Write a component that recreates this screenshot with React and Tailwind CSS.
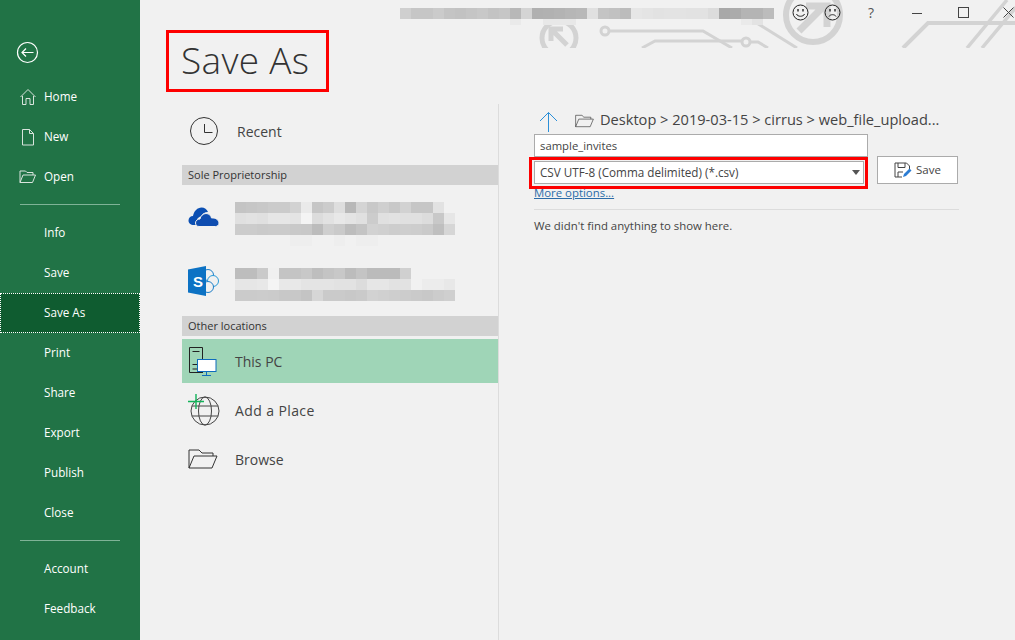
const font = { fontFamily: '"Open Sans", "Noto Sans", sans-serif' }

const topItems = ['Info', 'Save', 'Save As', 'Print', 'Share', 'Export', 'Publish', 'Close']

// gray levels of the pixelated (redacted) strips, one string per row, 2 hex digits per cell
const titleBlur = [
  'cfc6c6cbc4c2c5c8c3c6b8d4b0b1b3b6b8e0c4c1bce6e4e2e3e3e2e2dca8abb4b4bc',
  'f1f1f1f1f1f1f1f1f1f1eaf1f1e8e8e8f1f1f1f1f1f1f1f1f1f1f1f1f1f1f1eae3f1',
]
const oneDriveBlur = [
  'c4c6c8cbcbd2eac6ccdeb8d4c8cfc8d2c6c6e2f1',
  'e0e2e0e6e6e4f4dce2e8e4e0cce0e2e0e0dcc8e6',
  'cccccacbcbc9c8bccfcabdc4d2d0cdcecdcabfd6',
  'f1f1f1f1f1eeeef1f1eef1eeeef1f1f1f1f1f1f1',
]
const sharePointBlur = [
  'bdbdcaf0c4c4c8bec4c8bcc4bbbbbbd0f1f1f1f1',
  'e6e6e8f4e8e8e4e4e4e2e2dce6e6e2e2f1ecece8',
  'cbcbcccbc8c8c4d6cacac8cad2d0cecccac8cccf',
]

function Blur({ rows, lastHeight }) {
  return (
    <div className="flex flex-col">
      {rows.map((row, r) => (
        <div key={r} className="flex">
          {row.match(/../g).map((g, c) => (
            <div
              key={c}
              className="w-[11px]"
              style={{
                height: lastHeight && r === rows.length - 1 ? lastHeight : 11,
                backgroundColor: `#${g}${g}${g}`,
              }}
            />
          ))}
        </div>
      ))}
    </div>
  )
}

function CircuitArt() {
  return (
    <svg className="absolute left-0 top-0" width="1015" height="48" fill="none" stroke="#d3d3d3">
      <circle cx="559" cy="38" r="17" strokeWidth="5" />
      <path d="M553 31 567 45M551 41V29H563" strokeWidth="5" />
      <circle cx="605" cy="31" r="4" strokeWidth="3" />
      <path d="M609 31H703L732 48" strokeWidth="3" />
      <path d="M642 48 655 41H742M750 42H758L768 48" strokeWidth="3" />
      <circle cx="746" cy="42" r="4" strokeWidth="3" />
      <path d="M755 22 797 48" strokeWidth="3" />
      <circle cx="813" cy="15" r="27" strokeWidth="6" />
      <path d="M799 31 824 6M806 6H827V27" strokeWidth="7" />
      <path d="M903 48 928 23H1015" strokeWidth="4" />
      <path d="M967 48 1007 0M982 48 1022 0" strokeWidth="3.5" />
    </svg>
  )
}

function Face({ sad }) {
  return (
    <svg width="17" height="17" viewBox="0 0 17 17" fill="none" stroke="#222">
      <circle cx="8.5" cy="8.5" r="7.5" />
      <path d="M6 5v2.5M11 5v2.5" strokeWidth="1.4" />
      {sad ? <path d="M5 12.5c1-2.4 6-2.4 7 0" /> : <path d="M4.5 10c1 3 7 3 8 0" />}
    </svg>
  )
}

function WindowControls() {
  return (
    <div className="relative flex h-[24px] items-center pt-[1px]">
      <div className="ml-[18px]"><Face /></div>
      <div className="ml-[15px]"><Face sad /></div>
      <span className="ml-[27px] w-[8px] text-[14px] text-[#555]">?</span>
      <svg className="ml-[36px]" width="10" height="10" stroke="#444"><path d="M0 5.5H10" /></svg>
      <svg className="ml-[36px]" width="11" height="11" fill="none" stroke="#444"><rect x=".5" y=".5" width="10" height="10" /></svg>
      <svg className="ml-[34px] shrink-0" width="11" height="11" stroke="#444"><path d="M.5.5 10.5 10.5M10.5.5 .5 10.5" /></svg>
    </div>
  )
}

function SideRow({ label, active, icon }) {
  return (
    <div
      className={`flex h-[40px] items-center text-[11.7px] text-white ${
        active ? 'border border-dotted border-white bg-[#0f5c30] pl-[43px]' : 'pl-[44px]'
      }`}
    >
      {icon && <span className="absolute left-[19px] flex h-[18px] w-[18px] items-center justify-center">{icon}</span>}
      {label}
    </div>
  )
}

function Sidebar() {
  const ink = '#d9e4dd'
  return (
    <aside className="relative flex h-full w-[140px] shrink-0 flex-col bg-[#217346] pt-[77px]">
      <svg className="absolute left-[16px] top-[41px]" width="23" height="23" fill="none" stroke="#fff">
        <circle cx="11.5" cy="11.5" r="10" strokeWidth="1.2" />
        <path d="M17.5 11.5H6M10 7.5 6 11.5 10 15.5" strokeWidth="1.2" />
      </svg>
      <SideRow
        label="Home"
        icon={<svg width="18" height="18" fill="none" stroke={ink}><path d="M1.5 9 9 1.5 16.5 9M3.5 8V16.5H7V10.5H11V16.5H14.5V8" /></svg>}
      />
      <SideRow
        label="New"
        icon={<svg width="14" height="17" fill="none" stroke={ink}><path d="M1.5 .5H8.5L12.5 4.5V16H1.5ZM8.5 .5V4.5H12.5" /></svg>}
      />
      <SideRow
        label="Open"
        icon={<svg width="18" height="14" fill="none" stroke={ink}><path d="M1 12.5V1H6.5L8 2.5H14V5M1 12.5H13.5L16.5 5H4L1 12.5Z" /></svg>}
      />
      <div className="mx-[20px] mb-[8px] mt-[7px] h-[1px] bg-[#7fb397]" />
      <div className="flex flex-col">
        {topItems.map((label) => (
          <SideRow key={label} label={label} active={label === 'Save As'} />
        ))}
      </div>
      <div className="mx-[20px] mb-[8px] mt-[7px] h-[1px] bg-[#7fb397]" />
      <SideRow label="Account" />
      <SideRow label="Feedback" />
    </aside>
  )
}

function ClockIcon() {
  return (
    <svg width="32" height="30" fill="none" stroke="#333">
      <circle cx="16" cy="15" r="13.5" />
      <path d="M16.5 8V16.5H24.5" />
    </svg>
  )
}

function OneDriveIcon() {
  return (
    <svg width="32" height="20" viewBox="0 0 32 20">
      <path d="M6 18C2.5 18 .5 16 .5 13.5C.5 11 2.5 9 5 9C6 4 9.5 .5 13.5 .5C16.5 .5 19 2.5 20 5C16.5 5 14 7 13 9.5C9.5 10 7.5 13.5 9 18Z" fill="#0b4fb3" />
      <path d="M11 19.5C8.5 19.5 7.5 17.5 7.5 16C7.5 13.5 9.5 12 12 12C12.5 9 15 6.5 18 6.5C21 6.5 23 8.5 23.5 11C27.5 10.5 31 13 31 16C31 18 29.5 19.5 27.5 19.5Z" fill="#0f4db0" stroke="#f1f1f1" />
    </svg>
  )
}

function SharePointIcon() {
  return (
    <svg width="31" height="30" viewBox="0 0 31 30">
      <circle cx="20" cy="9" r="5.5" fill="#f1f1f1" stroke="#1f7fc8" />
      <circle cx="25" cy="15" r="5.5" fill="#f1f1f1" stroke="#2a9ad8" />
      <circle cx="20" cy="21" r="5.5" fill="#f1f1f1" stroke="#1f7fc8" />
      <path d="M0 3.5 18 0V30L0 26.5Z" fill="#0c72c4" />
      <text x="5" y="21" fontFamily="Liberation Sans" fontSize="15" fontWeight="700" fill="#fff">S</text>
    </svg>
  )
}

function PcIcon() {
  return (
    <svg width="29" height="30" fill="none">
      <path d="M15 26.5H1.5V1.5H14.5V13" stroke="#222" />
      <path d="M4.5 5.5H11.5M4.5 18.5H9M4.5 23H9" stroke="#222" />
      <rect x="9.5" y="13.5" width="18.5" height="12" fill="#fff" stroke="#0f6cbd" />
      <path d="M18.5 25.5V29M14 29.5H23" stroke="#0f6cbd" />
    </svg>
  )
}

function GlobeIcon() {
  return (
    <svg width="32" height="32" fill="none">
      <circle cx="17" cy="17" r="14" stroke="#444" />
      <ellipse cx="17" cy="17" rx="6.5" ry="14" stroke="#444" />
      <path d="M4 12H30M4 22H30" stroke="#444" />
      <path d="M0 7.5H16M8 0V15" stroke="#12b35a" strokeWidth="1.4" />
    </svg>
  )
}

function FolderIcon({ w = 30, h = 20 }) {
  return (
    <svg width={w} height={h} viewBox="0 0 30 20" fill="none" stroke="#333">
      <path d="M1 19V1H11L14 4H25V7M1 19H24L29 7H6L1 19Z" />
    </svg>
  )
}

function SectionHeader({ children }) {
  return <div className="flex h-[20px] items-center bg-[#d2d2d2] pl-[6px] text-[11px] text-[#333]">{children}</div>
}

function PlaceRow({ label, icon, active, className = '' }) {
  return (
    <div className={`flex h-[44px] items-center pl-[6px] text-[14px] text-[#444] ${active ? 'bg-[#9fd5b7]' : ''} ${className}`}>
      <span className="flex w-[47px] shrink-0">{icon}</span>
      {label}
    </div>
  )
}

function AccountRow({ icon, rows, className }) {
  return (
    <div className={`flex ${className}`}>
      <span className="flex w-[53px] shrink-0 items-start pl-[6px]">{icon}</span>
      <Blur rows={rows} />
    </div>
  )
}

function Places() {
  return (
    <div className="ml-[42px] h-[536px] w-[317px] shrink-0 border-r border-[#dcdcdc] pt-[4px]">
      <div className="flex h-[48px] items-center pb-[2px] pl-[6px] text-[14px] text-[#444]">
        <span className="flex w-[49px] shrink-0"><ClockIcon /></span>
        Recent
      </div>
      <div className="mt-[9px]" />
      <SectionHeader>Sole Proprietorship</SectionHeader>
      <AccountRow className="h-[66px] pt-[17px]" rows={oneDriveBlur} icon={<span className="mt-[5px]"><OneDriveIcon /></span>} />
      <AccountRow className="h-[65px] pt-[17px]" rows={sharePointBlur} icon={<span className="-mt-[2px]"><SharePointIcon /></span>} />
      <SectionHeader>Other locations</SectionHeader>
      <PlaceRow className="mt-[3px]" active label="This PC" icon={<PcIcon />} />
      <PlaceRow className="mt-[6px] pb-[2px] tracking-[0.4px]" label="Add a Place" icon={<GlobeIcon />} />
      <PlaceRow className="mt-[5px] pb-[2px]" label="Browse" icon={<FolderIcon />} />
    </div>
  )
}

function SaveIcon() {
  return (
    <svg width="18" height="16" fill="none">
      <path d="M8 15H1V1H12.5L15.5 4V7" stroke="#444" />
      <path d="M4 1V5.5H11V1M4 15V10H9" stroke="#444" />
      <path d="M9 15 10 12 15.5 6.5 17.5 8.5 12 14Z" fill="#2b7cd3" />
    </svg>
  )
}

function SavePanel() {
  return (
    <div className="ml-[35px] w-[425px] pt-[5px]">
      <div className="flex h-[24px] items-center whitespace-nowrap text-[#444]">
        <svg className="ml-[5px]" width="19" height="21" fill="none" stroke="#2b8fd8">
          <path d="M9.5 21V1.5M1 10 9.5 1.5 18 10" />
        </svg>
        <span className="ml-[17px] flex"><FolderIcon w={19} h={14} /></span>
        <span className="mb-[2px] ml-[6px] text-[14.6px]">Desktop &gt; 2019-03-15 &gt; cirrus &gt; web_file_upload...</span>
      </div>
      <div className="mt-[1px] flex h-[23px] w-[334px] items-center border border-[#ababab] bg-white pl-[5px] pt-[1px] text-[11.3px] text-[#444]">
        sample_invites
      </div>
      <div className="flex items-start">
        <div className="-ml-[5px] h-[32px] w-[339px] border-[3px] border-[#fe0000] p-[1px] pl-[2px]">
          <div className="flex h-[23px] items-center justify-between border border-[#ababab] bg-white pl-[5px] pr-[3px] text-[11.7px] text-[#444]">
            CSV UTF-8 (Comma delimited) (*.csv)
            <span className="h-0 w-0 border-x-[4px] border-t-[5px] border-x-transparent border-t-[#555]" />
          </div>
        </div>
        <div className="ml-[9px] mt-[-1px] flex h-[28px] w-[81px] items-center border border-[#ababab] bg-white pl-[16px] text-[11.5px] text-[#444]">
          <SaveIcon />
          <span className="ml-[4px]">Save</span>
        </div>
      </div>
      <div className="mt-[-6px] h-[26px] text-[11.4px] leading-[20px] text-[#2b6ca8] underline">More options...</div>
      <div className="h-[1px] bg-[#dcdcdc]" />
      <div className="mt-[7px] text-[11.4px] text-[#444]">We didn't find anything to show here.</div>
    </div>
  )
}

export default function App() {
  return (
    <div className="relative flex h-[640px] w-[1015px] overflow-hidden bg-[#f1f1f1]" style={font}>
      <Sidebar />
      <main className="min-w-0 flex-1">
        <CircuitArt />
        <div className="relative flex h-[30px] items-start pl-[260px] pt-[8px]">
          <Blur rows={titleBlur} lastHeight={6} />
          <div className="-mt-[8px]"><WindowControls /></div>
        </div>
        <div className="relative ml-[26px] flex h-[62px] w-[163px] items-center border-[3px] border-[#fe0000] pb-[3px] pl-[12px] text-[37px] font-light tracking-[0.3px] text-[#333]">
          Save As
        </div>
        <div className="relative mt-[12px] flex">
          <Places />
          <SavePanel />
        </div>
      </main>
    </div>
  )
}
